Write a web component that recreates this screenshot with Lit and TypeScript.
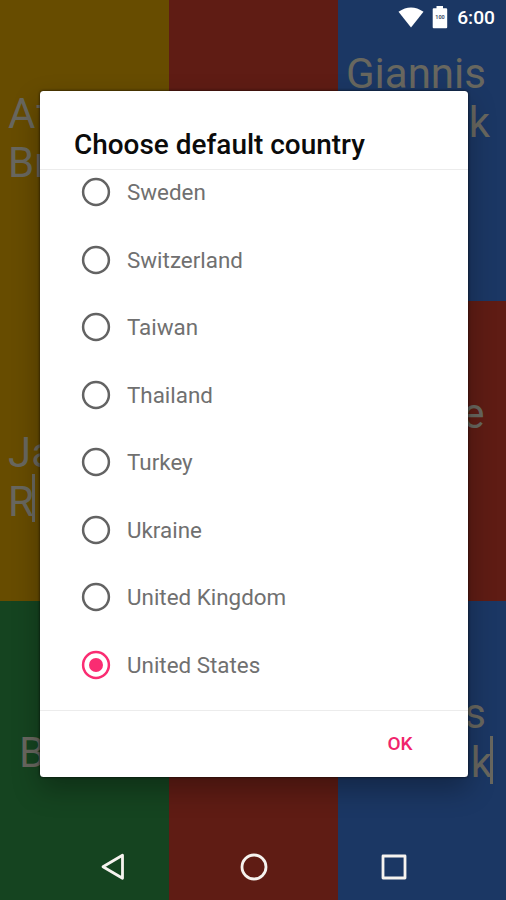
import { LitElement, html, css, svg } from "lit";
import { customElement, property } from "lit/decorators.js";
import { classMap } from "lit/directives/class-map.js";

interface Tile {
  color: string;
  align: string;
  lines: string[];
  caret?: boolean;
}

const TILES: Tile[] = [
  { color: "yellow", align: "upper", lines: ["Af", "Br"] },
  { color: "red", align: "", lines: [] },
  { color: "blue", align: "top end", lines: ["Giannis", "k"] },
  { color: "yellow", align: "middle", lines: ["Ja", "R"], caret: true },
  { color: "red", align: "", lines: [] },
  { color: "red", align: "single end", lines: ["e"] },
  { color: "green", align: "low", lines: ["B"] },
  { color: "red", align: "", lines: [] },
  { color: "blue", align: "bottom end", lines: ["s", "k"], caret: true },
];

const COUNTRIES = [
  "Sweden",
  "Switzerland",
  "Taiwan",
  "Thailand",
  "Turkey",
  "Ukraine",
  "United Kingdom",
  "United States",
];

@customElement("country-option")
class CountryOption extends LitElement {
  @property() label = "";
  @property({ type: Boolean }) checked = false;

  static styles = css`
    :host {
      display: flex;
      align-items: center;
      flex: none;
      height: 67.5px;
      padding-left: 41.5px;
    }
    .radio {
      width: 30px;
      height: 30px;
      flex: none;
      color: #636363;
    }
    .radio.on {
      color: #fa2c72;
    }
    .label {
      margin-left: 16px;
      font-size: 22.4px;
      line-height: 28px;
      color: #707070;
      white-space: nowrap;
    }
  `;

  render() {
    return html`
      <svg class=${classMap({ radio: true, on: this.checked })} viewBox="0 0 30 30">
        <circle cx="15" cy="15" r="12.9" fill="none" stroke="currentColor" stroke-width="2.5" />
        ${this.checked ? svg`<circle cx="15" cy="15" r="7" fill="currentColor" />` : null}
      </svg>
      <span class="label">${this.label}</span>
    `;
  }
}

@customElement("app-root")
class AppRoot extends LitElement {
  static styles = css`
    :host {
      display: block;
      position: relative;
      width: 506px;
      height: 900px;
      overflow: hidden;
      font-family: Roboto, "Liberation Sans", sans-serif;
    }
    .board {
      display: grid;
      grid-template-columns: 169px 169px 168px;
      grid-template-rows: 300.5px 300.5px 299px;
      height: 900px;
    }
    .tile {
      box-sizing: border-box;
      padding: 0 8px;
      font-size: 42px;
      line-height: 49px;
      color: #68675f;
      overflow: hidden;
      white-space: nowrap;
    }
    .yellow { background: #674c00; }
    .red { background: #5f1c14; }
    .blue { background: #1b3764; }
    .green { background: #154420; }
    .upper { padding-top: 89px; }
    .middle { padding-top: 127px; }
    .top { padding-top: 49px; }
    .single { padding-top: 88px; }
    .low { padding: 127px 0 0 19px; }
    .bottom { padding-top: 88px; }
    .end { text-align: right; padding-right: 15px; }
    .top.end { padding-right: 22px; }
    .single.end { padding-right: 21.5px; }
    .bottom.end { padding-right: 20px; }
    .top .line:last-child { margin-right: -6px; }
    .bottom .line:last-child { margin-right: -7px; }
    .caret {
      display: inline-block;
      width: 3px;
      height: 48px;
      margin: -6px 0 -4px -2px;
      vertical-align: -2.5px;
      background: currentColor;
    }
    .line { height: 49px; }
    .status {
      position: absolute;
      top: 5px;
      right: 11px;
      display: flex;
      align-items: center;
      height: 25px;
      color: #fff;
    }
    .wifi { width: 26px; height: 21px; }
    .battery { width: 16px; height: 22.5px; margin-left: 8px; }
    .level {
      font: 700 5.5px Roboto, sans-serif;
      fill: #48546e;
    }
    .clock {
      margin-left: 9px;
      font-size: 19.2px;
      font-weight: 500;
      line-height: 25px;
    }
    .scrim {
      position: absolute;
      inset: 0;
      display: flex;
      flex-direction: column;
      align-items: flex-start;
      padding: 90.5px 0 0 39.5px;
    }
    .dialog {
      display: flex;
      flex-direction: column;
      width: 428px;
      height: 686.5px;
      border-radius: 3.5px;
      background: #fff;
      box-shadow: 0 0 3px rgba(0, 0, 0, 0.8), 0 12px 28px rgba(0, 0, 0, 0.3);
      overflow: hidden;
    }
    .title {
      box-sizing: border-box;
      height: 79.5px;
      margin: 0;
      padding: 37px 0 0 34.5px;
      border-bottom: 1.5px solid #ececec;
      font-size: 27.95px;
      font-weight: 500;
      line-height: 34px;
      color: #0b0b0b;
      white-space: nowrap;
    }
    .list {
      display: flex;
      flex-direction: column;
      height: 540px;
      overflow: hidden;
    }
    .list country-option:first-child { margin-top: -11.5px; }
    .actions {
      display: flex;
      justify-content: flex-end;
      align-items: center;
      flex: 1;
      padding: 0 55px 2px 0;
      border-top: 1.5px solid #ececec;
    }
    .ok {
      padding: 0;
      border: 0;
      background: none;
      font: 500 19px Roboto, sans-serif;
      color: #f0246c;
    }
    .nav {
      position: absolute;
      left: 1px;
      right: 0;
      bottom: 0;
      display: flex;
      justify-content: center;
      align-items: center;
      gap: 110.5px;
      height: 67px;
    }
    .nav svg {
      width: 30px;
      height: 30px;
      fill: none;
      stroke: #f6f3ef;
      stroke-width: 2.8;
      stroke-linejoin: round;
    }
  `;

  render() {
    return html`
      <div class="board">
        ${TILES.map(
          (t) => html`<div class="tile ${t.color} ${t.align}">
            ${t.lines.map(
              (line, i) =>
                html`<div class="line">${line}${t.caret && i === t.lines.length - 1
                  ? html`<span class="caret"></span>`
                  : null}</div>`
            )}
          </div>`
        )}
      </div>

      <div class="scrim">
        <section class="dialog" role="dialog">
          <h1 class="title">Choose default country</h1>
          <div class="list">
            ${COUNTRIES.map(
              (name) => html`<country-option
                .label=${name}
                .checked=${name === "United States"}
              ></country-option>`
            )}
          </div>
          <div class="actions"><button class="ok">OK</button></div>
        </section>
      </div>

      <div class="status">
        <svg class="wifi" viewBox="0 0 26 21">
          <path d="M.5 4.8Q13-4 25.5 4.8L13 20.5Z" fill="currentColor" />
        </svg>
        <svg class="battery" viewBox="0 0 16 22.5">
          <path d="M4.500 0h6.500v2.300H14q1.200 0 1.200 1V21.300q0 1-1 1H1.700q-1 0-1-1V3.300q0-1 1-1h2.800Z" fill="currentColor" />
          <text class="level" x="8" y="12.500" text-anchor="middle">100</text>
        </svg>
        <span class="clock">6:00</span>
      </div>

      <nav class="nav">
        <svg viewBox="0 0 30 30"><path d="M5 14.800L24.500 3.300V26.300Z" /></svg>
        <svg viewBox="0 0 30 30"><circle cx="15" cy="15" r="12" /></svg>
        <svg viewBox="0 0 30 30"><rect x="4" y="4" width="22" height="22" /></svg>
      </nav>
    `;
  }
}
